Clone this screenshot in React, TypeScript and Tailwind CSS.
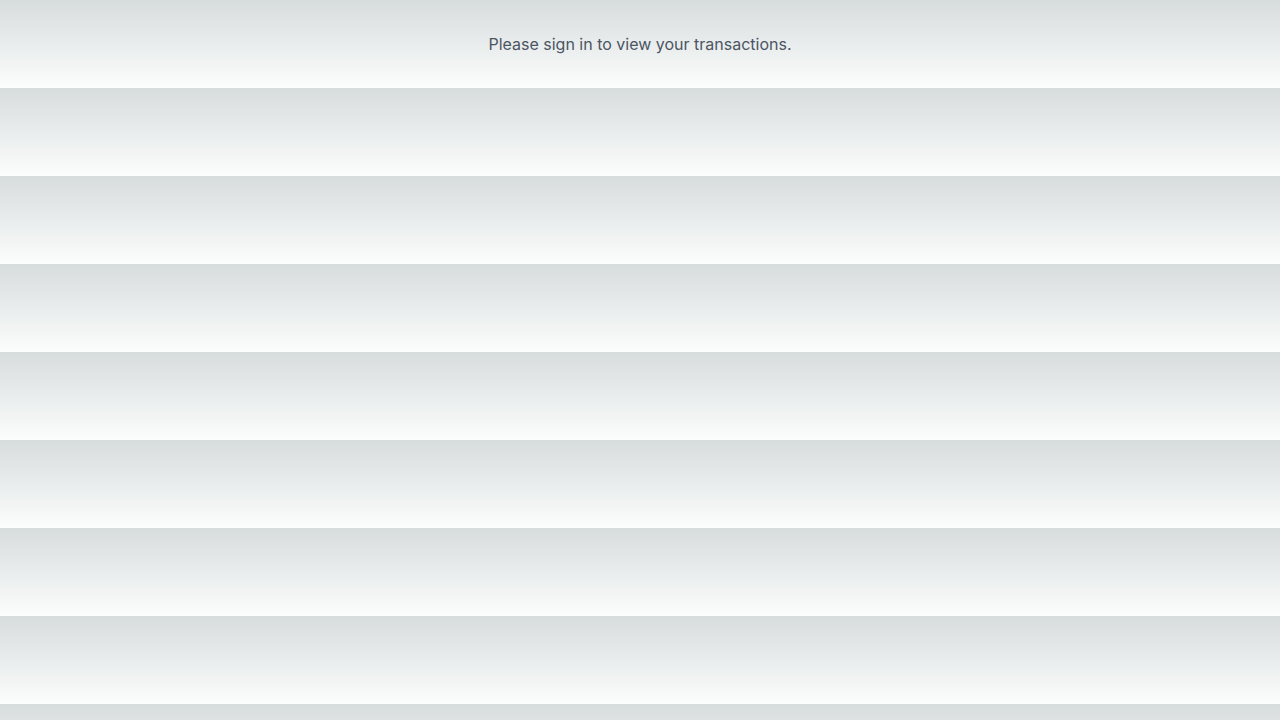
export default function App() {
  return (
    <div
      className="w-full h-[720px] overflow-hidden bg-[linear-gradient(to_bottom,#d7dcdc,#fcfdfd)] bg-[length:100%_88px] bg-repeat"
      style={{ fontFamily: "Inter, 'Noto Sans', sans-serif" }}
    >
      <div className="py-8 text-center text-base leading-6 text-[#4b5563]">
        Please sign in to view your transactions.
      </div>
    </div>
  );
}
